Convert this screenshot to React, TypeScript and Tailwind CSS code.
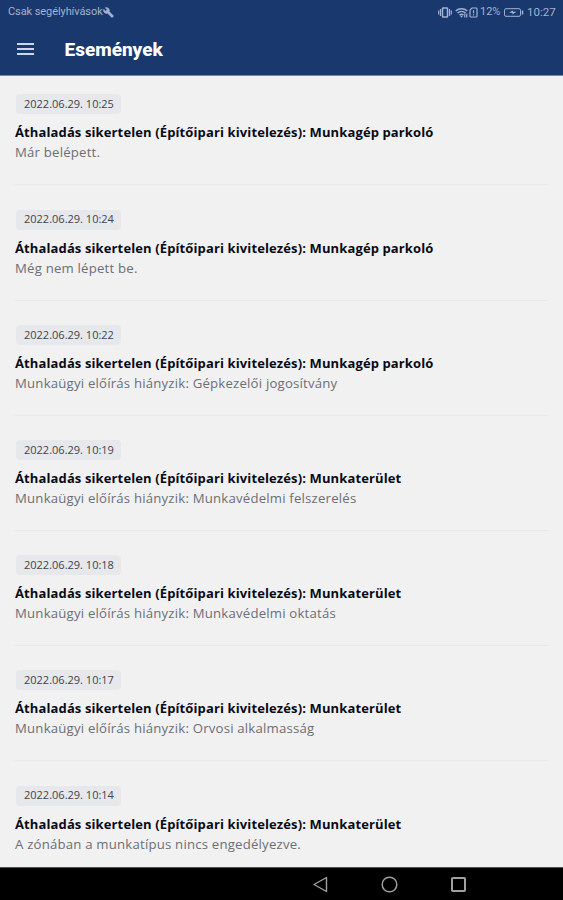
import React from "react";

interface EventItem {
    time: string;
    title: string;
    message: string;
}

const PARKING = "Áthaladás sikertelen (Építőipari kivitelezés): Munkagép parkoló";
const WORK_AREA = "Áthaladás sikertelen (Építőipari kivitelezés): Munkaterület";

const events: EventItem[] = [
    { time: "2022.06.29. 10:25", title: PARKING, message: "Már belépett." },
    { time: "2022.06.29. 10:24", title: PARKING, message: "Még nem lépett be." },
    { time: "2022.06.29. 10:22", title: PARKING, message: "Munkaügyi előírás hiányzik: Gépkezelői jogosítvány" },
    { time: "2022.06.29. 10:19", title: WORK_AREA, message: "Munkaügyi előírás hiányzik: Munkavédelmi felszerelés" },
    { time: "2022.06.29. 10:18", title: WORK_AREA, message: "Munkaügyi előírás hiányzik: Munkavédelmi oktatás" },
    { time: "2022.06.29. 10:17", title: WORK_AREA, message: "Munkaügyi előírás hiányzik: Orvosi alkalmasság" },
    { time: "2022.06.29. 10:14", title: WORK_AREA, message: "A zónában a munkatípus nincs engedélyezve." },
];

function StatusBar() {
    return (
        <div className="flex h-[25px] items-center pl-2 pr-[7px] text-[11px] text-[#a3b2d2] font-[Roboto,sans-serif]">
            <span className="w-[95px] whitespace-nowrap tracking-[-0.08px]">Csak segélyhívások</span>
            <svg className="h-[11px] w-[11px]" viewBox="0 0 24 24" fill="currentColor" stroke="currentColor">
                <path d="M22.7 19l-9.1-9.1c.9-2.3.4-5-1.5-6.9-2-2-5-2.4-7.4-1.3L9 6 6 9 1.6 4.7C.4 7.1.9 10.1 2.9 12.1c1.9 1.9 4.6 2.4 6.9 1.5l9.1 9.1c.4.4 1 .4 1.4 0l2.3-2.3c.5-.4.5-1.1.1-1.4z" />
            </svg>
            <div className="ml-auto flex items-center">
                <svg className="h-[11px] w-[14px]" viewBox="0 0 14 11" fill="none" stroke="currentColor" strokeWidth="1.5">
                    <rect x="4.5" y="1" width="5" height="9" rx=".5" />
                    <path d="M2.5 2v7M11.5 2v7" strokeWidth="1.2" />
                    <path d="M.7 3.5v4M13.3 3.5v4" strokeWidth="1.2" />
                </svg>
                <svg className="ml-[3px] h-[10px] w-[13px]" viewBox="0 0 13 10" fill="none" stroke="currentColor" strokeWidth="1.5">
                    <path d="M.7 3C4 .1 9 .1 12.3 3M2.5 5c2.3-2 5.7-2 8 0M4.5 7c1.3-1 2.7-1 4 0" />
                    <path d="M5 7.8l1.5 1.9L8 7.8z" fill="currentColor" stroke="none" />
                    <path d="M9.8 5.5v4M11.8 5.5v4" strokeWidth="1.2" />
                </svg>
                <svg className="ml-[1px] h-[11px] w-[9px]" viewBox="0 0 9 11" fill="none" stroke="currentColor" strokeWidth="1.2">
                    <path d="M3 1h4.2q.8 0 .8.8v7.4q0 .8-.8.8H1.8Q1 10 1 9.2V3z" />
                    <path d="M4.5 3.3v3M4.5 7.3v1.2" />
                </svg>
                <span className="ml-[2px] w-[22px] whitespace-nowrap">12%</span>
                <svg className="ml-[2px] h-[9px] w-[20px]" viewBox="0 0 20 9" fill="none" stroke="currentColor">
                    <rect x=".5" y=".7" width="16" height="7.6" rx="1.5" />
                    <path d="M18.5 2.5v4" strokeWidth="1.5" />
                    <path d="M5 4.5l4-2v1.3h3.5l-4 2.7V5z" fill="currentColor" stroke="none" />
                </svg>
                <span className="ml-[3px] w-[29px] whitespace-nowrap text-[11.5px]">10:27</span>
            </div>
        </div>
    )
}

function Header() {
    return (
        <header className="h-[76px] shrink-0 border-b border-[#7488ad] bg-[#19386d]">
            <StatusBar />
            <div className="flex h-[48px] items-center pl-[17px]">
                <svg className="h-3 w-[17px] text-[#cdd6e9]" viewBox="0 0 17 12" fill="currentColor">
                    <path d="M0 0h17v2H0zM0 5h17v2H0zM0 10h17v2H0z" />
                </svg>
                <h1 className="ml-[30.5px] pt-[2px] text-[19px] font-extrabold text-white font-[Roboto,sans-serif]">Események</h1>
            </div>
        </header>
    )
}

function EventRow({ event }: { event: EventItem }) {
    return (
        <li className="flex h-[115.2px] shrink-0 flex-col items-start">
            <span className="ml-px flex h-5 w-[105px] items-center whitespace-nowrap rounded-sm bg-[#e6e8ec] pl-2 text-[11px] text-[#3f444d]">{event.time}</span>
            <h2 className="mt-2 whitespace-nowrap text-[13px] font-bold leading-5 tracking-[0.12px] text-[#080b16]">{event.title}</h2>
            <p className="whitespace-nowrap text-[13.2px] leading-5 tracking-[0.2px] text-[#6c6f75]">{event.message}</p>
            <div className="mt-[22px] h-px w-full bg-[#e7e8e9]"></div>
        </li>
    )
}

function NavigationBar() {
    return (
        <nav className="flex h-[33px] shrink-0 items-center gap-[52px] border-t border-[#555555] bg-black pl-[312px] text-[#a0a0a0]">
            <svg className="h-[17px] w-[17px]" viewBox="0 0 17 17" fill="none" stroke="currentColor" strokeWidth="1.4">
                <path d="M14.5 1.5v14L2 8.5z" strokeLinejoin="round" />
            </svg>
            <svg className="h-[17px] w-[17px]" viewBox="0 0 17 17" fill="none" stroke="currentColor" strokeWidth="1.5">
                <circle cx="8.5" cy="8.5" r="7.3" />
            </svg>
            <svg className="h-[17px] w-[17px]" viewBox="0 0 17 17" fill="none" stroke="currentColor" strokeWidth="2">
                <rect x="2" y="2" width="13" height="13" rx=".8" />
            </svg>
        </nav>
    )
}

export default function App() {
    return (
        <div className="flex h-[900px] w-[563px] flex-col overflow-hidden bg-[#f1f1f1] font-['Open_Sans',sans-serif]">
            <Header />
            <ul className="flex min-h-0 flex-1 flex-col overflow-hidden px-[15px] pt-[18.4px]">
                {events.map((event) => (
                    <EventRow key={event.time} event={event} />
                ))}
            </ul>
            <NavigationBar />
        </div>
    )
}
